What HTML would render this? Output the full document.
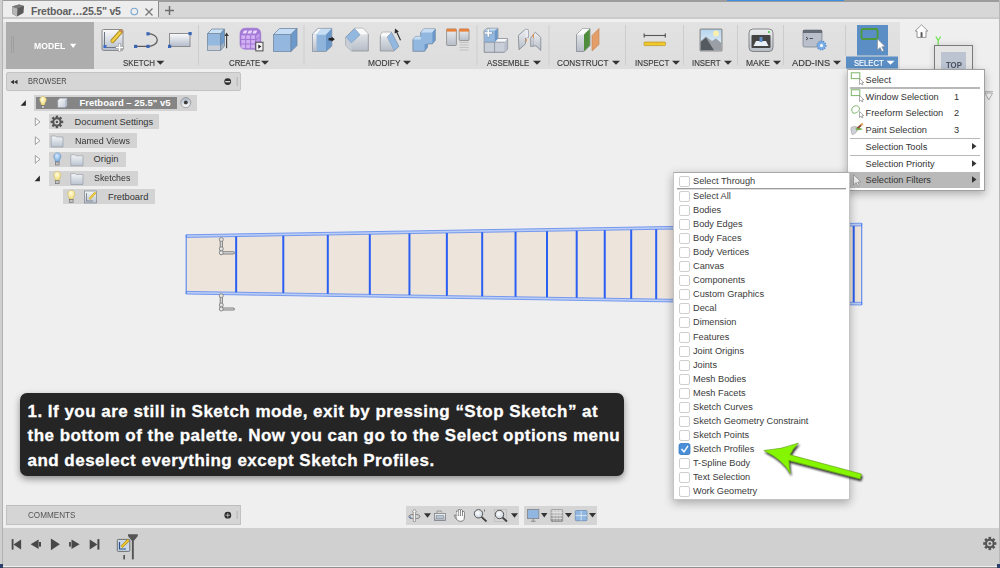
<!DOCTYPE html>
<html><head><meta charset="utf-8">
<style>
*{box-sizing:border-box;margin:0;padding:0}
html,body{width:1000px;height:568px;overflow:hidden}
body{background:#efefef;position:relative;font-family:"Liberation Sans",sans-serif;color:#444}
.a{position:absolute}
.lbl{position:absolute;top:58px;font-size:9px;line-height:10px;color:#4a4a4a;white-space:nowrap;transform-origin:0 0;-webkit-text-stroke:0.15px currentColor}
.sep{position:absolute;top:50px;width:1px;height:16px;background:#c8c8c8}
.tri{display:inline-block;width:0;height:0;border-left:4px solid transparent;border-right:4px solid transparent;border-top:5px solid #333;margin-left:1px;vertical-align:1px}
.row{position:absolute;height:15px;background:#d5d5d5}
.tt{position:absolute;font-size:9.3px;line-height:10px;color:#333;white-space:nowrap}
.mi{position:absolute;left:865.6px;font-size:9.2px;line-height:10px;color:#333;white-space:nowrap}
.fi{position:absolute;left:693px;font-size:9.2px;line-height:10px;color:#3a3a3a;white-space:nowrap}
.cb{position:absolute;left:679px;width:11px;height:11px;border:1px solid #cfcfcf;border-radius:2px;background:#fff}
</style></head><body>

<!-- window chrome -->
<div class="a" style="left:0;top:0;width:1000px;height:1.6px;background:#9c9c9c"></div>
<div class="a" style="left:727px;top:0;width:117px;height:1px;background:#3b8fe0"></div>
<div class="a" style="left:0;top:1.6px;width:1000px;height:16.4px;background:#d7d7d7"></div>
<div class="a" style="left:3px;top:1px;width:155px;height:17px;background:#ededed"></div>
<div class="a" style="left:158px;top:1px;width:1px;height:17px;background:#8c8c8c"></div>
<div class="a" style="left:0;top:17px;width:1000px;height:1.5px;background:#cbcbcb"></div>
<div class="a" style="left:0;top:18.5px;width:1000px;height:3.5px;background:#f0f0f0"></div>


<!-- tab contents -->
<svg class="a" style="left:11px;top:4px" width="14" height="13" viewBox="0 0 14 13">
<path d="M1 2.5 L8 0.5 L13 2 L12.5 9 L6 12.5 L1.5 10 Z" fill="#5a5a5a"/>
<path d="M1 2.5 L6.5 4.5 L6 12.5 L1.5 10 Z" fill="#b5b5b5"/>
<path d="M1 2.5 L8 0.5 L13 2 L6.5 4.5 Z" fill="#7a7a7a"/>
</svg>
<div class="a" style="left:31px;top:5px;font-size:10.5px;line-height:12px;font-weight:bold;color:#606060;letter-spacing:-0.2px;white-space:nowrap">Fretboar…25.5" v5</div>
<svg class="a" style="left:129px;top:7px" width="11" height="10"><circle cx="5.3" cy="4.6" r="3.3" fill="none" stroke="#7aa8d0" stroke-width="1.1"/></svg>
<svg class="a" style="left:144px;top:7px" width="10" height="10"><path d="M1.5 1.5 L8.5 8.5 M8.5 1.5 L1.5 8.5" stroke="#777" stroke-width="1.3"/></svg>
<svg class="a" style="left:164px;top:5px" width="11" height="11"><path d="M5.5 1 V10 M1 5.5 H10" stroke="#6e6e6e" stroke-width="1.5"/></svg>

<!-- toolbar -->
<div class="a" style="left:3px;top:22px;width:897px;height:46.5px;background:linear-gradient(#e2e2e2,#dddddd)"></div>
<div class="a" style="left:6px;top:22px;width:87.5px;height:46.5px;background:#adadad"></div>


<!-- toolbar icons -->
<svg class="a" style="left:0;top:0" width="1000" height="72" viewBox="0 0 1000 72">
<defs>
<linearGradient id="gw" x1="0" y1="0" x2="0" y2="1"><stop offset="0" stop-color="#fbfbfb"/><stop offset="1" stop-color="#b3bccb"/></linearGradient>
<linearGradient id="gg" x1="0" y1="0" x2="0" y2="1"><stop offset="0" stop-color="#eeeff1"/><stop offset="1" stop-color="#b6bdc8"/></linearGradient>
<linearGradient id="gsky" x1="0" y1="0" x2="0" y2="1"><stop offset="0" stop-color="#b5d6f0"/><stop offset="1" stop-color="#eef3f7"/></linearGradient>
</defs>
<!-- model grip -->
<path d="M11.5 36 V53 M13.5 36 V53" stroke="#9c9c9c" stroke-width="0.8"/>
<!-- separators -->
<g fill="#cdcdcd">
<rect x="198" y="25" width="1" height="40"/><rect x="303.5" y="25" width="1" height="40"/>
<rect x="476.5" y="25" width="1" height="40"/><rect x="548.5" y="25" width="1" height="40"/>
<rect x="625" y="25" width="1" height="40"/><rect x="683" y="25" width="1" height="40"/>
<rect x="737" y="25" width="1" height="40"/><rect x="783" y="25" width="1" height="40"/>
<rect x="845" y="25" width="1" height="31"/>
</g>
<!-- sketch -->
<rect x="102" y="29.5" width="21" height="21" rx="1.5" fill="url(#gw)" stroke="#8a8a8a"/>
<path d="M104.5 32 V47.5 H116" stroke="#6e7580" stroke-width="1" fill="none"/>
<rect x="103.5" y="45" width="3" height="3" fill="#3a6cc8"/>
<path d="M121 31.5 L112.5 41" stroke="#a9881c" stroke-width="4.2" stroke-linecap="round"/>
<path d="M121 31.5 L112.5 41" stroke="#f3d046" stroke-width="2.6" stroke-linecap="round"/>
<circle cx="121.5" cy="31" r="1.6" fill="#c98a5a"/>
<path d="M115.5 47.5 H123.5 M119.5 43.5 V51.5" stroke="#9a9a9a" stroke-width="3"/>
<path d="M116 47.5 H123 M119.5 44 V51" stroke="#fff" stroke-width="1.6"/>
<!-- arc -->
<path d="M135.5 46.3 H148 M148 33.7 A9.3 6.3 0 0 1 148 46.3" stroke="#5c5c5c" stroke-width="1.3" fill="none"/>
<g fill="#3b66b6"><rect x="134" y="44.8" width="3.2" height="3.2"/><rect x="146.4" y="44.8" width="3.2" height="3.2"/><rect x="146.4" y="32.2" width="3.2" height="3.2"/></g>
<!-- rect -->
<rect x="169.5" y="33.5" width="20.5" height="13" fill="url(#gw)" stroke="#8d8d8d"/>
<g fill="#3b66b6"><rect x="188.5" y="32" width="3.2" height="3.2"/><rect x="168" y="44.8" width="3.2" height="3.2"/></g>
<!-- extrude -->
<path d="M207.5 33.5 H220.5 V50.5 H207.5 Z" fill="#94b8de" stroke="#75889e" stroke-width="0.8"/>
<rect x="207.9" y="45.5" width="12.3" height="4.6" fill="#c9ced6"/>
<path d="M207.5 33.5 L212 29 H224.5 L220.5 33.5 Z" fill="#c9e0f5" stroke="#75889e" stroke-width="0.8"/>
<path d="M220.5 33.5 L224.5 29 V46 L220.5 50.5 Z" fill="#6c9acb" stroke="#75889e" stroke-width="0.8"/><path d="M220.9 46 L224.1 42.5 V45.8 L220.9 49.8 Z" fill="#aab3bf"/>
<path d="M226.6 48.2 V35" stroke="#3a3a3a" stroke-width="1.1"/><path d="M224.4 36 L226.6 32.6 L228.8 36 Z" fill="#3a3a3a"/>
<!-- purple -->
<path d="M240 34 Q240 28.2 246 28.2 H255 Q260.8 28.2 260.8 34 V44 Q260.8 49.3 255 49.3 H246 Q240 49.3 240 44 Z" fill="#a277d6" stroke="#9a70cc" stroke-width="0.6"/>
<rect x="241.3" y="35.2" width="3.9" height="3.7" rx="0.6" fill="#d2b0f3"/><rect x="241.3" y="39.9" width="3.9" height="3.7" rx="0.6" fill="#d2b0f3"/><rect x="241.3" y="44.6" width="3.9" height="3.7" rx="0.6" fill="#d2b0f3"/><rect x="246.2" y="35.2" width="3.9" height="3.7" rx="0.6" fill="#d2b0f3"/><rect x="246.2" y="39.9" width="3.9" height="3.7" rx="0.6" fill="#d2b0f3"/><rect x="246.2" y="44.6" width="3.9" height="3.7" rx="0.6" fill="#d2b0f3"/><rect x="251.1" y="35.2" width="3.9" height="3.7" rx="0.6" fill="#d2b0f3"/><rect x="251.1" y="39.9" width="3.9" height="3.7" rx="0.6" fill="#d2b0f3"/><rect x="251.1" y="44.6" width="3.9" height="3.7" rx="0.6" fill="#d2b0f3"/>
<path d="M242.5 33.6 L244.0 30.6 H247.5 L246.1 33.6 Z" fill="#e9d8fb"/><path d="M247.4 33.6 L248.9 30.6 H252.4 L251.0 33.6 Z" fill="#e9d8fb"/><path d="M252.3 33.6 L253.8 30.6 H257.3 L255.9 33.6 Z" fill="#e9d8fb"/>
<path d="M256.2 35.5 L259.6 33.0 V36.7 L256.2 39.0 Z" fill="#c39ce9"/><path d="M256.2 40.2 L259.6 37.7 V41.4 L256.2 43.7 Z" fill="#c39ce9"/><path d="M256.2 44.9 L259.6 42.4 V46.1 L256.2 48.4 Z" fill="#c39ce9"/>
<rect x="255.8" y="42.2" width="7.2" height="8.7" fill="#f2f2f2" stroke="#3a3a3a" stroke-width="0.9"/>
<path d="M258.3 44.4 L261.3 46.6 L258.3 48.8 Z" fill="#222"/>
<!-- box -->
<path d="M273.5 34.5 H291 V51.5 H273.5 Z" fill="#93b7de" stroke="#7088a3" stroke-width="0.8"/>
<path d="M273.5 34.5 L279.5 28.5 H297 L291 34.5 Z" fill="#c5ddf4" stroke="#7088a3" stroke-width="0.8"/>
<path d="M291 34.5 L297 28.5 V45.5 L291 51.5 Z" fill="#6b99cb" stroke="#7088a3" stroke-width="0.8"/>
<!-- press pull -->
<path d="M312.5 34.2 L318 28.4 H331.8 V46.1 L326 51.4 H312.5 Z" fill="#8fb4dc" stroke="#858c96" stroke-width="0.8"/>
<path d="M312.8 34.5 H316.5 V51.1 H312.8 Z" fill="url(#gg)"/>
<path d="M312.8 34.3 L318.2 28.7 H321.3 L316.5 34.5 Z" fill="#fafafa"/>
<path d="M316.5 34.8 L321.2 28.7 H331.6 L326 34.8 Z" fill="#c6def4"/>
<path d="M326 34.8 L331.6 28.7 V46 L326 51.2 Z" fill="#6b98c9"/>
<path d="M328.6 38 H331.5 V36.6 L334.8 39.2 L331.5 41.8 V40.4 H328.6 Z" fill="#222"/>
<!-- fillet -->
<path d="M354.6 28.3 H362.8 L368.3 34.1 V51 H351.7 L345.5 45.2 V37.4 Z" fill="url(#gg)" stroke="#8a8f96" stroke-width="0.8"/>
<path d="M345.5 37.4 L351.4 42.9 L351.7 51 L345.5 45.2 Z" fill="#c9ced6"/>
<path d="M354.6 28.5 H362.8 L368.1 34.1 L360.2 34.8 Z" fill="#fafafa"/>
<path d="M354.6 28.6 L360.2 34.8 L351.4 42.9 L345.9 37 Z" fill="#93b8e0" stroke="#7d95b0" stroke-width="0.5"/>
<!-- draft -->
<path d="M382.3 32.2 H391.4 L398.8 46.5 L394 51 H380.3 V36 Z" fill="url(#gg)" stroke="#8a8f96" stroke-width="0.8"/>
<path d="M382.3 32.4 H391.2 L387.1 36.7 L380.5 36 Z" fill="#fafafa"/>
<path d="M391.4 32.5 L398.8 46.1 L394.3 50.7 L387.1 37 Z" fill="#93b8e0" stroke="#7d95b0" stroke-width="0.5"/>
<path d="M400.5 40.3 L396.5 31.5" stroke="#2a2a2a" stroke-width="1.1"/><path d="M395 28.6 L394.6 33.6 L398.9 31.5 Z" fill="#2a2a2a"/>
<!-- combine -->
<path d="M412.9 39.6 L415.8 36.4 H420.7 V32.5 L423.6 28.9 H435.3 V40.3 L432.4 43.9 H427.5 V47.1 L424.6 51.3 H412.9 Z" fill="#93b8e0" stroke="#74879e" stroke-width="0.8"/>
<path d="M420.9 32.6 L423.7 29.1 H435.1 L432.4 32.6 Z M413.1 39.6 L415.9 36.6 H420.8 V39.6 Z" fill="#c6def4"/>
<path d="M432.4 32.6 L435.1 29.1 V40.2 L432.4 43.7 Z M424.6 43.9 L427.4 43.9 V47 L424.6 51.1 Z" fill="#6b98c9"/>
<!-- params -->
<rect x="446.6" y="29" width="9.8" height="16.5" rx="1" fill="url(#gg)" stroke="#858585" stroke-width="0.8"/>
<rect x="446.6" y="28.8" width="9.8" height="2.8" fill="#e8803a"/>
<rect x="459.2" y="29" width="9.8" height="11.6" rx="1" fill="url(#gg)" stroke="#858585" stroke-width="0.8"/>
<rect x="459.2" y="28.8" width="9.8" height="2.8" fill="#e8803a"/>
<path d="M459.5 42.5 H468.8 M459.5 45 H468.8 M459.5 47.5 H468.8 M459.5 50 H468.8" stroke="#c2c2c2" stroke-width="1.2"/>
<!-- new component -->
<path d="M484.2 30.5 L487.2 28.3 H497.9 V38.7 H507.6 V49 L504.4 52.3 H484.2 Z" fill="#c9cfd9" stroke="#7a7f88" stroke-width="0.8"/>
<path d="M484.5 30.6 L487.3 28.5 H497.7 L494.6 30.8 Z" fill="#c6def4"/>
<rect x="484.5" y="30.6" width="10.1" height="11.6" fill="#93b8e0"/>
<path d="M494.6 30.8 L497.7 28.5 V39.5 L494.6 42.2 Z" fill="#6b98c9"/>
<path d="M494.8 42.2 L497.9 38.9 H507.4 L504.4 42.2 Z" fill="#f7f8fa"/>
<path d="M504.4 42.2 L507.4 38.9 V48.9 L504.4 52.1 Z" fill="#b9c0cb"/>
<path d="M484.5 42.2 H504.4 M494.6 42.2 V52.1" stroke="#80858e" stroke-width="0.7"/>
<path d="M484.6 33 H492 M488.3 29.3 V36.8" stroke="#8a8a8a" stroke-width="2.6" stroke-linecap="round" opacity="0.5"/>
<path d="M484.6 33 H492 M488.3 29.3 V36.8" stroke="#fff" stroke-width="1.6"/>
<!-- joint -->
<path d="M518.4 35.4 L525.5 29.2 L528.4 29.9 V37.4 L525.5 38 V43.9 L519 49.7 Z" fill="url(#gg)" stroke="#80868e" stroke-width="0.8"/>
<path d="M525.5 29.4 L528.2 30 V37.3 L525.5 37.9 Z" fill="#e9ecf0"/>
<path d="M530.7 38 L535.3 32.2 L540.8 37.4 V50.4 L535.9 45.8 L530.7 46.5 Z" fill="url(#gg)" stroke="#80868e" stroke-width="0.8"/>
<path d="M533.2 37 V46" stroke="#9aa0a8" stroke-width="0.6"/>
<path d="M526.2 39 V41.5 M533.3 34 V37.8" stroke="#e8883a" stroke-width="1.1"/>
<!-- construct -->
<path d="M576.5 34.5 L582.5 28.5 H590 V45.5 L584 51.5 H576.5 Z" fill="url(#gg)" stroke="#858a92" stroke-width="0.8"/>
<path d="M576.8 34.5 L582.6 28.8 H589.8 L584 34.5 Z" fill="#fbfbfb"/>
<path d="M584 34.6 L589.8 28.8 V45.4 L584 51.2 Z" fill="#4f8c3c"/>
<path d="M592 35.5 L599 28.5 V44.5 L592 51 Z" fill="#e39e6a" stroke="#c0804e" stroke-width="0.6"/>
<!-- inspect -->
<path d="M644.2 35.5 H665.3" stroke="#555" stroke-width="1.1"/><path d="M644.2 33.5 V37.5 M665.3 33.5 V37.5" stroke="#555" stroke-width="1.2"/>
<rect x="644" y="42" width="21.5" height="3.6" rx="0.8" fill="#f2cb2a" stroke="#b8922a" stroke-width="0.7"/>
<path d="M646.5 42.3 V43.5 M649 42.3 V43.5 M651.5 42.3 V43.5 M654 42.3 V43.5 M656.5 42.3 V43.5 M659 42.3 V43.5 M661.5 42.3 V43.5" stroke="#c9a020" stroke-width="0.5"/>
<!-- insert -->
<rect x="699.5" y="28.5" width="23" height="23" rx="1.5" fill="#8d8d8d"/>
<rect x="700.7" y="29.7" width="20.6" height="20.6" fill="url(#gsky)"/>
<circle cx="716" cy="33.5" r="3" fill="#f7eeb0"/>
<path d="M700.7 50.3 V41 L706 36.5 L712 41 L716 38.5 L721.3 43 V50.3 Z" fill="#9a9fa6"/>
<path d="M700.7 50.3 V42 L706 37.5 L714 50.3 Z" fill="#555a60"/>
<!-- make -->
<rect x="749" y="29" width="24" height="22.5" rx="4" fill="url(#gg)" stroke="#7c7c7c" stroke-width="0.9"/>
<rect x="751.5" y="35" width="19" height="13" rx="1" fill="#444"/>
<path d="M753.5 46 L756 41 H766 L768.5 46 Z" fill="#e8eef5"/>
<rect x="759.5" y="37" width="3" height="5" fill="#5a8ccc"/>
<circle cx="769" cy="32" r="1" fill="#3bbf3b"/>
<!-- add-ins -->
<rect x="803" y="30" width="19" height="17" rx="1.5" fill="#b9c0cb" stroke="#7d8590" stroke-width="0.8"/>
<rect x="803" y="30" width="19" height="3" fill="#666c75"/>
<path d="M806 37 L808 38.5 L806 40 M809.5 38.5 H813" stroke="#333" stroke-width="0.8" fill="none"/>
<circle cx="821.5" cy="45.5" r="4.2" fill="#7db0e6" stroke="#5a90d0" stroke-width="1.6" stroke-dasharray="1.3 1"/>
<circle cx="821.5" cy="45.5" r="1.5" fill="#fff"/>
<!-- select -->
<rect x="857" y="25" width="31" height="30.5" fill="#5b8ec4"/>
<rect x="861.5" y="29" width="16" height="10" rx="1.5" fill="none" stroke="#4c9a3c" stroke-width="1.8"/>
<path d="M877.5 39 V50 L880 47.5 L882 51.5 L883.8 50.6 L881.8 46.8 L885 46.5 Z" fill="#fff" stroke="#8a8a8a" stroke-width="0.6"/>
<rect x="846" y="56.5" width="52" height="12" fill="#5b8ec4"/>
</svg>
<div class="a" style="left:34px;top:41px;font-size:9.2px;line-height:10px;color:#fff;font-weight:bold;transform:scaleX(0.94);transform-origin:0 0">MODEL</div>
<svg class="a" style="left:0;top:0" width="1000" height="72">
<path d="M70 43.7 H76.3 L73.15 47.9 Z" fill="#fff"/>
<path d="M156.4 60.8 H164.4 L160.4 64.8 Z" fill="#333"/>
<path d="M261 60.8 H269 L265 64.8 Z" fill="#333"/>
<path d="M403 60.8 H411 L407 64.8 Z" fill="#333"/>
<path d="M533 60.8 H541 L537 64.8 Z" fill="#333"/>
<path d="M612 60.8 H620 L616 64.8 Z" fill="#333"/>
<path d="M672 60.8 H680 L676 64.8 Z" fill="#333"/>
<path d="M724 60.8 H732 L728 64.8 Z" fill="#333"/>
<path d="M773 60.8 H781 L777 64.8 Z" fill="#333"/>
<path d="M833 60.8 H841 L837 64.8 Z" fill="#333"/>
<path d="M886.5 60.8 H894.5 L890.5 64.8 Z" fill="#fff"/>
</svg>
<div class="lbl" style="left:123.1px;color:#3c3c3c;transform:scaleX(0.877)">SKETCH</div>
<div class="lbl" style="left:228.7px;color:#3c3c3c;transform:scaleX(0.872)">CREATE</div>
<div class="lbl" style="left:367.9px;color:#3c3c3c;transform:scaleX(0.929)">MODIFY</div>
<div class="lbl" style="left:487.2px;color:#3c3c3c;transform:scaleX(0.872)">ASSEMBLE</div>
<div class="lbl" style="left:557.0px;color:#3c3c3c;transform:scaleX(0.912)">CONSTRUCT</div>
<div class="lbl" style="left:634.5px;color:#3c3c3c;transform:scaleX(0.882)">INSPECT</div>
<div class="lbl" style="left:692.0px;color:#3c3c3c;transform:scaleX(0.869)">INSERT</div>
<div class="lbl" style="left:746.0px;color:#3c3c3c;transform:scaleX(0.941)">MAKE</div>
<div class="lbl" style="left:791.9px;color:#3c3c3c;transform:scaleX(1.030)">ADD-INS</div>
<div class="lbl" style="left:853.9px;color:#fff;transform:scaleX(0.843)">SELECT</div>

<!-- canvas left/right borders -->
<div class="a" style="left:0;top:0;width:2px;height:568px;background:#cfcfcf"></div>
<div class="a" style="left:2px;top:0;width:1px;height:568px;background:#b2b2b2"></div>
<div class="a" style="left:999px;top:0;width:1px;height:568px;background:#b8b8b8"></div>



<!-- timeline -->
<div class="a" style="left:3px;top:528px;width:996px;height:38px;background:#d0d0d0"></div>
<div class="a" style="left:0;top:566.5px;width:1000px;height:1.5px;background:#8e8e8e"></div><div class="a" style="left:0;top:564px;width:3px;height:4px;background:#2a3f6a"></div><div class="a" style="left:997px;top:564px;width:3px;height:4px;background:#2a3f6a"></div>

<!-- fretboard -->
<svg class="a" style="left:0;top:0" width="1000" height="568">
<path d="M186.2 234.80 L861.7 223.20 V305.00 L186.2 294.00 Z" fill="#ede5dc"/>
<path d="M186.2 234.80 L861.7 223.20 L861.7 225.80 L186.2 237.40 Z" fill="#bacdf5" stroke="#6a91ee" stroke-width="0.9"/>
<path d="M186.2 294.00 L861.7 305.00 L861.7 302.40 L186.2 291.40 Z" fill="#bacdf5" stroke="#6a91ee" stroke-width="0.9"/>
<path d="M186.2 234.80 V294.00 M861.7 223.20 V305.00" stroke="#5583ee" stroke-width="1.1"/>
<path d="M236.15 236.54 V292.21 M283.30 235.73 V292.98 M327.80 234.97 V293.71 M369.81 234.25 V294.39 M409.45 233.57 V295.03 M446.87 232.92 V295.64 M482.20 232.32 V296.22 M515.54 231.75 V296.76 M547.00 231.21 V297.27 M576.70 230.70 V297.76 M604.74 230.21 V298.21 M631.20 229.76 V298.64 M656.18 229.33 V299.05 M679.75 228.93 V299.43 M702.00 228.54 V299.80 M723.00 228.18 V300.14 M742.83 227.84 V300.46 M761.54 227.52 V300.77 M779.20 227.22 V301.05 M795.87 226.93 V301.33 M811.60 226.66 V301.58 M826.45 226.41 V301.82 M840.47 226.17 V302.05 M853.70 225.94 V302.27 " stroke="#2b5ff2" stroke-width="2"/>
<path d="M221.3 239.5 V252.8 H233.3" stroke="#808080" stroke-width="3.2" fill="none" stroke-linecap="round" stroke-linejoin="round"/>
<path d="M221.3 239.5 V252.8 H233.3" stroke="#dedede" stroke-width="1.2" fill="none" stroke-linecap="round"/>
<circle cx="221.3" cy="239.5" r="2" fill="#e4e4e4" stroke="#808080" stroke-width="0.9"/>
<circle cx="221.3" cy="248.8" r="2" fill="#e4e4e4" stroke="#808080" stroke-width="0.9"/>
<circle cx="221.3" cy="252.8" r="2" fill="#e4e4e4" stroke="#808080" stroke-width="0.9"/>
<path d="M221.3 295.7 V309.0 H233.3" stroke="#808080" stroke-width="3.2" fill="none" stroke-linecap="round" stroke-linejoin="round"/>
<path d="M221.3 295.7 V309.0 H233.3" stroke="#dedede" stroke-width="1.2" fill="none" stroke-linecap="round"/>
<circle cx="221.3" cy="295.7" r="2" fill="#e4e4e4" stroke="#808080" stroke-width="0.9"/>
<circle cx="221.3" cy="305.0" r="2" fill="#e4e4e4" stroke="#808080" stroke-width="0.9"/>
<circle cx="221.3" cy="309.0" r="2" fill="#e4e4e4" stroke="#808080" stroke-width="0.9"/>
</svg>

<!-- browser -->
<div class="a" style="left:6px;top:72px;width:235px;height:19px;background:#d6d6d6;border:1px solid #c3c3c3;border-radius:2px"></div>
<div class="a" style="left:27.5px;top:77px;font-size:8.8px;line-height:9px;color:#4a4a4a;white-space:nowrap;transform:scaleX(0.85);transform-origin:0 0">BROWSER</div>
<svg class="a" style="left:0;top:70px" width="245" height="140" viewBox="0 70 245 140">
<path d="M10.5 82 L14 79.8 V84.2 Z M14 82 L17.5 79.8 V84.2 Z" fill="#333"/>
<circle cx="227.7" cy="81.6" r="3.4" fill="#303030"/><rect x="225.3" y="81" width="4.8" height="1.3" fill="#ddd"/>
<rect x="236.5" y="77" width="1.5" height="9" fill="#bdbdbd"/>
<!-- root -->
<path d="M20.6 105.7 L25.9 100.1 V105.7 Z" fill="#2a2a2a"/>
<path d="M35.3 118 L40 121.9 L35.3 125.7 Z M35.3 136.8 L40 140.6 L35.3 144.5 Z M35.3 155.5 L40 159.3 L35.3 163.2 Z" fill="#fafafa" stroke="#8a8a8a" stroke-width="0.8"/>
<path d="M34.6 181.2 L39.9 175.6 V181.2 Z" fill="#2a2a2a"/>
</svg>
<div class="row" style="left:34px;top:95px;width:163px;height:16px;background:#d3d3d3"></div>
<div class="row" style="left:36px;top:97px;width:140.8px;height:12px;background:#858585"></div>
<div class="row" style="left:48.6px;top:114.2px;width:110.6px;background:#d3d3d3"></div>
<div class="row" style="left:48.6px;top:133px;width:88.4px;background:#d3d3d3"></div>
<div class="row" style="left:48.6px;top:151.8px;width:77px;background:#d3d3d3"></div>
<div class="row" style="left:48.6px;top:170.5px;width:89.4px;background:#d3d3d3"></div>
<div class="row" style="left:62.7px;top:189.2px;width:92.7px;background:#d3d3d3"></div>
<div class="tt" style="left:79.4px;top:98px;font-size:9.5px;font-weight:bold;color:#fff">Fretboard – 25.5" v5</div>
<div class="tt" style="left:74.6px;top:116.8px">Document Settings</div>
<div class="tt" style="left:74.6px;top:135.6px;transform:scaleX(0.96);transform-origin:0 0">Named Views</div>
<div class="tt" style="left:93.6px;top:154.4px">Origin</div>
<div class="tt" style="left:93.6px;top:173.1px;transform:scaleX(0.95);transform-origin:0 0">Sketches</div>
<div class="tt" style="left:108px;top:191.8px">Fretboard</div>
<svg class="a" style="left:0;top:90px" width="245" height="120" viewBox="0 90 245 120">
<defs>
<radialGradient id="bulbY" cx="0.45" cy="0.35" r="0.7"><stop offset="0" stop-color="#fffbe0"/><stop offset="1" stop-color="#f0d96a"/></radialGradient>
<radialGradient id="bulbB" cx="0.45" cy="0.35" r="0.7"><stop offset="0" stop-color="#d8ecff"/><stop offset="1" stop-color="#6aa0d8"/></radialGradient>
<linearGradient id="fold" x1="0" y1="0" x2="0" y2="1"><stop offset="0" stop-color="#f4f6f8"/><stop offset="1" stop-color="#b9c3cf"/></linearGradient>
<linearGradient id="cubeg" x1="0" y1="0" x2="1" y2="1"><stop offset="0" stop-color="#f8f9fb"/><stop offset="1" stop-color="#c3cad6"/></linearGradient>
</defs>
<!-- root icons -->
<path d="M40.2 101.5 A3.3 3.3 0 1 1 45.8 101.5 C45 103 44.6 104 44.6 105.3 H41.4 C41.4 104 41 103 40.2 101.5 Z" fill="url(#bulbY)" stroke="#c9b25a" stroke-width="0.4"/>
<rect x="41.5" y="105.5" width="3" height="3" fill="#c4c4c4" stroke="#666" stroke-width="0.6"/>
<path d="M57.8 100.5 L59.8 98.2 H67 V105.3 L65 107.5 H57.8 Z" fill="url(#cubeg)" stroke="#9aa3b0" stroke-width="0.5"/>
<path d="M65 100.5 L67 98.2 V105.3 L65 107.5 Z" fill="#b4bfce"/>
<linearGradient id="rad" x1="0" y1="0" x2="0" y2="1"><stop offset="0" stop-color="#a9b4c4"/><stop offset="1" stop-color="#ffffff"/></linearGradient><circle cx="185.8" cy="102.6" r="5" fill="url(#rad)" stroke="#8f8f8f" stroke-width="0.8"/><circle cx="185.8" cy="102.4" r="1.9" fill="#3a3a3a"/>
<!-- gear -->
<g transform="translate(56.9 121.9)">
<circle r="4.6" fill="#555"/>
<g fill="#555"><rect x="-1.2" y="-6.3" width="2.4" height="12.6"/><rect x="-6.3" y="-1.2" width="12.6" height="2.4"/><rect x="-1.2" y="-6.3" width="2.4" height="12.6" transform="rotate(45)"/><rect x="-1.2" y="-6.3" width="2.4" height="12.6" transform="rotate(-45)"/></g>
<circle r="2.6" fill="#d3d3d3"/><circle r="1.2" fill="#555"/>
</g>
<!-- folders -->
<g stroke="#8d96a3" stroke-width="0.6" fill="url(#fold)">
<path d="M51.2 136 H55.5 L56.5 137 H63 V147 H51.2 Z"/>
<path d="M70.8 154.8 H75 L76 155.8 H83 V165.8 H70.8 Z"/>
<path d="M70.8 173.5 H75 L76 174.5 H83 V184.5 H70.8 Z"/>
</g>
<!-- bulbs -->
<g transform="translate(0 1.5)">
<path d="M54 156.3 A3.6 3.6 0 1 1 60.6 156.3 C59.7 158 59.3 159 59.3 160.3 H55.3 C55.3 159 54.9 158 54 156.3 Z" fill="url(#bulbB)" stroke="#5a88b8" stroke-width="0.5"/>
<rect x="55.5" y="160.5" width="3.6" height="3" fill="#c4c4c4" stroke="#666" stroke-width="0.6"/>
<path d="M54 175 A3.6 3.6 0 1 1 60.6 175 C59.7 176.7 59.3 177.7 59.3 179 H55.3 C55.3 177.7 54.9 176.7 54 175 Z" fill="url(#bulbY)" stroke="#c9b25a" stroke-width="0.5"/>
<rect x="55.5" y="179.2" width="3.6" height="3" fill="#c4c4c4" stroke="#666" stroke-width="0.6"/>
<path d="M68 193.7 A3.6 3.6 0 1 1 74.6 193.7 C73.7 195.4 73.3 196.4 73.3 197.7 H69.3 C69.3 196.4 68.9 195.4 68 193.7 Z" fill="url(#bulbY)" stroke="#c9b25a" stroke-width="0.5"/>
<rect x="69.5" y="197.9" width="3.6" height="3" fill="#c4c4c4" stroke="#666" stroke-width="0.6"/>
</g>
<!-- sketch icon -->
<rect x="84.5" y="191" width="12" height="12" fill="url(#fold)" stroke="#7b8490" stroke-width="0.7"/>
<path d="M86.5 193 V201 H93" stroke="#667" stroke-width="0.7" fill="none"/>
<path d="M95.5 192.5 L89.5 199" stroke="#c9a020" stroke-width="2.2"/><path d="M95.5 192.5 L89.5 199" stroke="#f3d04a" stroke-width="1.2"/>
</svg>


<!-- comments -->
<div class="a" style="left:6px;top:505px;width:235px;height:19.5px;background:#d5d5d5;border:1px solid #c2c2c2;border-top:1.5px solid #bdbdbd"></div>
<div class="a" style="left:27.5px;top:510px;font-size:9.2px;line-height:10px;color:#555;white-space:nowrap;transform:scaleX(0.885);transform-origin:0 0">COMMENTS</div>
<svg class="a" style="left:200px;top:500px" width="50" height="30" viewBox="200 500 50 30">
<circle cx="227.8" cy="515.2" r="3.4" fill="#2a2a2a"/><path d="M225.5 515.2 H230.1 M227.8 512.9 V517.5" stroke="#ccc" stroke-width="0.8"/>
<rect x="236.5" y="511" width="1.5" height="8" fill="#bdbdbd"/>
</svg>

<!-- nav bar -->
<div class="a" style="left:405.5px;top:506px;width:113px;height:19px;background:#d5d5d5"></div>
<div class="a" style="left:524px;top:506px;width:73px;height:18.5px;background:#d5d5d5"></div>
<svg class="a" style="left:400px;top:500px" width="200" height="28" viewBox="400 500 200 28">
<defs>
<linearGradient id="gscr" x1="0" y1="0" x2="0" y2="1"><stop offset="0" stop-color="#f6f6f6"/><stop offset="1" stop-color="#aeb3ba"/></linearGradient>
<radialGradient id="lens" cx="0.4" cy="0.4" r="0.6"><stop offset="0" stop-color="#ffffff"/><stop offset="1" stop-color="#c9d3dc"/></radialGradient>
</defs>
<g fill="#333"><path d="M424 513.2 H431 L427.5 517.8 Z"/><path d="M511 513.2 H518 L514.5 517.8 Z"/><path d="M541 513 H547.5 L544.25 517.6 Z"/><path d="M565 513 H572 L568.5 517.6 Z"/><path d="M589 513 H596 L592.5 517.6 Z"/></g>
<!-- orbit -->
<g transform="translate(0.6 0)">
<ellipse cx="413.8" cy="516.5" rx="5.6" ry="2.2" fill="none" stroke="#777" stroke-width="1"/>
<path d="M413.8 509 L416 512 H414.9 V521.5 H412.7 V512 H411.6 Z" fill="#f2f2f2" stroke="#8a8a8a" stroke-width="0.7"/>
<path d="M408.5 517.5 L410 516 V519 Z" fill="#3a6ab8"/>
</g>
<!-- look at -->
<rect x="434.5" y="513.5" width="11" height="7" fill="url(#gscr)" stroke="#7a7f88" stroke-width="0.8"/>
<rect x="436.5" y="515.5" width="7" height="3" fill="#b9c6d6" stroke="#7a7f88" stroke-width="0.5"/>
<path d="M437 513 V511 H441 L442 512.5" stroke="#888" stroke-width="0.8" fill="none"/>
<!-- hand -->
<g stroke-linecap="round">
<path d="M457.2 517 V511.8 M459.3 516 V510.2 M461.4 516 V510.6 M463.4 516.5 V512.2 M457.2 518.5 L455 515.8" stroke="#666" stroke-width="2.4"/>
<path d="M457.2 517 V511.8 M459.3 516 V510.2 M461.4 516 V510.6 M463.4 516.5 V512.2 M457.2 518.5 L455 515.8" stroke="#fafafa" stroke-width="1.1"/>
<path d="M456.3 515.5 H464.3 V518 C464.3 520.3 462.8 521.3 460.5 521.3 C458.3 521.3 457.2 520.5 456.3 518.5 Z" fill="#fafafa" stroke="#666" stroke-width="0.8"/>
<path d="M457.2 516.2 V512 M459.3 516.2 V510.4 M461.4 516.2 V510.8 M463.4 516.2 V512.4" stroke="#fafafa" stroke-width="1.1"/>
</g>
<!-- zoom -->
<circle cx="478.5" cy="513.8" r="4.2" fill="url(#lens)" stroke="#555" stroke-width="1"/>
<path d="M481.5 516.8 L486.5 521.5" stroke="#444" stroke-width="1.8"/>
<path d="M484.5 509.5 V511.5" stroke="#666" stroke-width="0.9"/>
<!-- zoom window -->
<rect x="494.5" y="509.5" width="12" height="12" fill="none" stroke="#999" stroke-width="0.6" stroke-dasharray="1 1"/>
<circle cx="499.5" cy="514.5" r="4.2" fill="url(#lens)" stroke="#555" stroke-width="1"/>
<path d="M502.5 517.5 L507 521.5" stroke="#444" stroke-width="1.8"/>
<!-- display -->
<rect x="527.5" y="509.5" width="11.3" height="9" fill="#8fb7e2" stroke="#8a8f96" stroke-width="1"/>
<path d="M531 521.3 H535.5 M533.2 518.5 V521" stroke="#888" stroke-width="1.1"/>
<!-- grid -->
<linearGradient id="ggrid" x1="0" y1="0" x2="0" y2="1"><stop offset="0" stop-color="#d6d6d6"/><stop offset="1" stop-color="#8e8e8e"/></linearGradient>
<rect x="551" y="509.5" width="11.7" height="12" rx="1" fill="url(#ggrid)" stroke="#8a8a8a" stroke-width="0.7"/>
<path d="M554 509.8 V521.3 M557 509.8 V521.3 M560 509.8 V521.3 M551.3 512.5 H562.5 M551.3 515.5 H562.5 M551.3 518.5 H562.5" stroke="#ececec" stroke-width="0.6"/>
<!-- viewports -->
<rect x="575.3" y="510.5" width="11.7" height="10.2" rx="1" fill="#8fb7e2" stroke="#6f8fb5" stroke-width="0.8"/>
<path d="M581.15 510.8 V520.5 M575.6 515.6 H586.8" stroke="#dfe8f2" stroke-width="0.9"/>
</svg>

<!-- timeline icons -->
<svg class="a" style="left:0;top:528px" width="150" height="38" viewBox="0 528 150 38">
<g fill="#484848">
<rect x="11.7" y="539.1" width="1.8" height="10.5"/><path d="M13.5 544.4 L21.1 539.4 V549.4 Z"/>
<path d="M30.6 544.3 L38.6 539.5 V549.1 Z"/><rect x="39" y="542" width="2" height="4.6"/>
<path d="M50.9 538.4 L59.9 544.35 L50.9 550.3 Z"/>
<rect x="69.1" y="542" width="1.8" height="4.6"/><path d="M71.5 539.5 L79.6 544.3 L71.5 549.1 Z"/>
<path d="M89.7 539.4 L97.4 544.4 L89.7 549.4 Z"/><rect x="97.4" y="539.1" width="2" height="10.5"/>
</g>
<rect x="117.3" y="539.4" width="12.5" height="12" rx="1" fill="#c9d7e8" stroke="#555" stroke-width="0.8"/>
<path d="M119.5 542 V549 H126" stroke="#2b4f86" stroke-width="1.2" fill="none"/>
<path d="M128.5 540 L121.5 547" stroke="#b08a10" stroke-width="2.6"/><path d="M128.5 540 L121.5 547" stroke="#f5cc30" stroke-width="1.4"/>
<rect x="123.3" y="555" width="1.7" height="4.4" fill="#555"/>
<path d="M128 534.2 H137.8 V536 L134.2 540.5 H131.6 L128 536 Z" fill="#555"/>
<rect x="131.9" y="538" width="1.9" height="21.4" fill="#555"/>
</svg>
<svg class="a" style="left:980px;top:534px" width="20" height="20" viewBox="980 534 20 20">
<g transform="translate(989.8 543.5)">
<circle r="4.8" fill="#555"/>
<g fill="#555"><rect x="-1.3" y="-6.6" width="2.6" height="13.2"/><rect x="-6.6" y="-1.3" width="13.2" height="2.6"/><rect x="-1.3" y="-6.6" width="2.6" height="13.2" transform="rotate(45)"/><rect x="-1.3" y="-6.6" width="2.6" height="13.2" transform="rotate(-45)"/></g>
<circle r="2.8" fill="#d0d0d0"/><circle r="1.3" fill="#555"/>
</g>
</svg>

<!-- home + viewcube -->
<svg class="a" style="left:905px;top:20px" width="80" height="52" viewBox="905 20 80 52">
<path d="M915.2 31 L921.5 24.8 L927.8 31 H926 V37.4 H917 V31 Z" fill="#fff" stroke="#8a8a8a" stroke-width="0.9" stroke-linejoin="round"/>
<rect x="920.6" y="32.2" width="1.9" height="5" fill="#555"/>
<path d="M935.8 36.5 L938.2 40.5 L940.6 36.5 M938.2 40.5 V45.3" stroke="#72e452" stroke-width="1.3" fill="none"/>
</svg>
<div class="a" style="left:934px;top:45px;width:39px;height:30px;background:#e5e5e5;border:1px solid #7a7a7a;box-shadow:0 0 6px 1px rgba(0,0,0,0.1)"></div>
<div class="a" style="left:941px;top:52px;width:25px;height:20px;background:#bcc4d1"></div>
<div class="a" style="left:946px;top:59.5px;font-size:9.5px;line-height:10px;font-weight:bold;color:#4a5364;transform:scaleX(0.82);transform-origin:0 0">TOP</div>
<svg class="a" style="left:984px;top:90px" width="10" height="12"><path d="M1 3 H8.5 L4.75 10 Z" fill="#f4f4f4" stroke="#9a9a9a" stroke-width="0.8"/><path d="M0.5 1.5 H9" stroke="#aaa" stroke-width="0.8"/></svg>

<!-- select menu -->
<div class="a" style="left:846.5px;top:68.5px;width:138px;height:122px;background:#fff;border:1px solid #a0a0a0;border-left-color:#bdbdbd;box-shadow:0 3px 8px rgba(0,0,0,0.28)"></div>
<div class="a" style="left:850px;top:172px;width:130px;height:16px;background:#b9b9b9"></div>
<div class="a" style="left:850px;top:87px;width:130px;height:1.5px;background:#b8b8b8"></div>
<div class="a" style="left:850px;top:137.7px;width:130px;height:1.5px;background:#b8b8b8"></div>
<div class="a" style="left:850px;top:154.5px;width:130px;height:1.5px;background:#b8b8b8"></div>
<div class="mi" style="top:74.6px">Select</div>
<div class="mi" style="top:91.6px">Window Selection</div>
<div class="mi" style="top:108.1px">Freeform Selection</div>
<div class="mi" style="top:124.6px">Paint Selection</div>
<div class="mi" style="top:141.6px">Selection Tools</div>
<div class="mi" style="top:158.6px">Selection Priority</div>
<div class="mi" style="top:175.1px">Selection Filters</div>
<div class="mi" style="left:954px;top:91.6px">1</div>
<div class="mi" style="left:954px;top:108.1px">2</div>
<div class="mi" style="left:954px;top:124.6px">3</div>
<svg class="a" style="left:845px;top:68px" width="140" height="125" viewBox="845 68 140 125">
<g fill="none" stroke="#7cb56a" stroke-width="1">
<rect x="851.3" y="72.8" width="8.5" height="5.8"/>
<rect x="851.3" y="89.8" width="8.5" height="5.8"/>
<path d="M853 113 C850 109 853 105.5 856.5 105.8 C860 106.2 860.5 110 857.5 112 C856 113 854.5 113.5 853 113 Z"/>
</g>
<g fill="#fff" stroke="#777" stroke-width="0.6">
<path d="M859.5 78.5 V84.5 L861 83.2 L862 85 L863 84.5 L862 82.8 L863.8 82.6 Z"/>
<path d="M859.5 95.5 V101.5 L861 100.2 L862 102 L863 101.5 L862 99.8 L863.8 99.6 Z"/>
<path d="M859.5 111.5 V117.5 L861 116.2 L862 118 L863 117.5 L862 115.8 L863.8 115.6 Z"/>
</g>
<path d="M851 127.8 C853 126.2 856 126 857.8 127.6 L857.2 131 C855.8 133 853.8 134.5 852.2 134.5 C851.2 132.2 850.8 130 851 127.8 Z" fill="#cdd1d7" stroke="#9a9a9a" stroke-width="0.6"/>
<path d="M855.5 127.8 Q859.5 126.8 863 129.3 Q859.5 130.6 856 130.2 Z" fill="#79b35a"/>
<path d="M857.6 128.3 L861.2 125" stroke="#8a4a2a" stroke-width="1.9"/>
<circle cx="862" cy="124.2" r="1.2" fill="#eea55a"/>
<g fill="#333"><path d="M972 143 L976.5 146.2 L972 149.4 Z"/><path d="M972 160.3 L976.5 163.5 L972 166.7 Z"/><path d="M972 176.3 L976.5 179.5 L972 182.7 Z"/></g>
<path d="M853.5 174.5 V185 L856 182.5 L858 186.5 L859.5 185.8 L857.6 182 L860.8 181.8 Z" fill="#eee" stroke="#8a8a8a" stroke-width="0.7"/>
</svg>

<!-- filters submenu -->
<div class="a" style="left:673px;top:172px;width:176.5px;height:328px;background:#fff;border:1px solid #c4c4c4;border-top-color:#a8a8a8;box-shadow:0 3px 9px rgba(0,0,0,0.3)"></div>
<div class="a" style="left:677px;top:188px;width:169px;height:1px;background:#9c9c9c"></div><div class="a" style="left:677px;top:189px;width:169px;height:1px;background:#dcdcdc"></div>
<div class="cb" style="top:176.00px"></div>
<div class="fi" style="top:176.00px">Select Through</div>
<div class="cb" style="top:191.00px"></div>
<div class="fi" style="top:191.00px">Select All</div>
<div class="cb" style="top:205.05px"></div>
<div class="fi" style="top:205.05px">Bodies</div>
<div class="cb" style="top:219.10px"></div>
<div class="fi" style="top:219.10px">Body Edges</div>
<div class="cb" style="top:233.15px"></div>
<div class="fi" style="top:233.15px">Body Faces</div>
<div class="cb" style="top:247.20px"></div>
<div class="fi" style="top:247.20px">Body Vertices</div>
<div class="cb" style="top:261.25px"></div>
<div class="fi" style="top:261.25px">Canvas</div>
<div class="cb" style="top:275.30px"></div>
<div class="fi" style="top:275.30px">Components</div>
<div class="cb" style="top:289.35px"></div>
<div class="fi" style="top:289.35px">Custom Graphics</div>
<div class="cb" style="top:303.40px"></div>
<div class="fi" style="top:303.40px">Decal</div>
<div class="cb" style="top:317.45px"></div>
<div class="fi" style="top:317.45px">Dimension</div>
<div class="cb" style="top:331.50px"></div>
<div class="fi" style="top:331.50px">Features</div>
<div class="cb" style="top:345.55px"></div>
<div class="fi" style="top:345.55px">Joint Origins</div>
<div class="cb" style="top:359.60px"></div>
<div class="fi" style="top:359.60px">Joints</div>
<div class="cb" style="top:373.65px"></div>
<div class="fi" style="top:373.65px">Mesh Bodies</div>
<div class="cb" style="top:387.70px"></div>
<div class="fi" style="top:387.70px">Mesh Facets</div>
<div class="cb" style="top:401.75px"></div>
<div class="fi" style="top:401.75px">Sketch Curves</div>
<div class="cb" style="top:415.80px"></div>
<div class="fi" style="top:415.80px">Sketch Geometry Constraint</div>
<div class="cb" style="top:429.85px"></div>
<div class="fi" style="top:429.85px">Sketch Points</div>
<div class="cb" style="top:443.90px"></div>
<div class="fi" style="top:443.90px">Sketch Profiles</div>
<div class="cb" style="top:457.95px"></div>
<div class="fi" style="top:457.95px">T-Spline Body</div>
<div class="cb" style="top:472.00px"></div>
<div class="fi" style="top:472.00px">Text Selection</div>
<div class="cb" style="top:486.05px"></div>
<div class="fi" style="top:486.05px">Work Geometry</div>
<svg class="a" style="left:678px;top:442px" width="14" height="14"><rect x="1" y="1.5" width="11" height="11" rx="2" fill="#4a8fd8" stroke="#3a78c0" stroke-width="0.8"/><path d="M3.5 7 L6 9.8 L10 3.8" stroke="#fff" stroke-width="1.4" fill="none"/></svg>


<!-- green arrow -->
<svg class="a" style="left:740px;top:425px" width="140" height="70" viewBox="740 425 140 70">
<defs><filter id="sh" x="-20%" y="-30%" width="140%" height="160%"><feGaussianBlur in="SourceAlpha" stdDeviation="1.1"/><feOffset dx="1.3" dy="1.6" result="b"/><feComponentTransfer><feFuncA type="linear" slope="0.85"/></feComponentTransfer><feMerge><feMergeNode/><feMergeNode in="SourceGraphic"/></feMerge></filter></defs>
<path filter="url(#sh)" d="M763.9 450.5 Q781.2 449.6 798.4 443.1 Q792.6 449.2 789.9 454.8 L861.4 474 L860.1 478.9 L788.9 460.4 Q789.2 467 790.3 473.6 Q783.5 460 763.9 450.5 Z" fill="#86f500" stroke="#5c9a10" stroke-width="0.6" stroke-linejoin="round"/>
</svg>

<!-- instruction box -->
<div class="a" style="left:20.3px;top:392.8px;width:603.5px;height:83px;background:#252525;border-radius:7px;box-shadow:0 3px 7px rgba(0,0,0,0.42)"></div>
<div class="a" style="left:27.5px;top:400px;width:600px;font-weight:bold;font-size:17px;line-height:24.4px;color:#fff;letter-spacing:0.48px;white-space:nowrap;-webkit-text-stroke:0.3px #fff">1. If you are still in Sketch mode, exit by pressing “Stop Sketch” at<br>the bottom of the palette. Now you can go to the Select options menu<br>and deselect everything except Sketch Profiles.</div>


</body></html>
